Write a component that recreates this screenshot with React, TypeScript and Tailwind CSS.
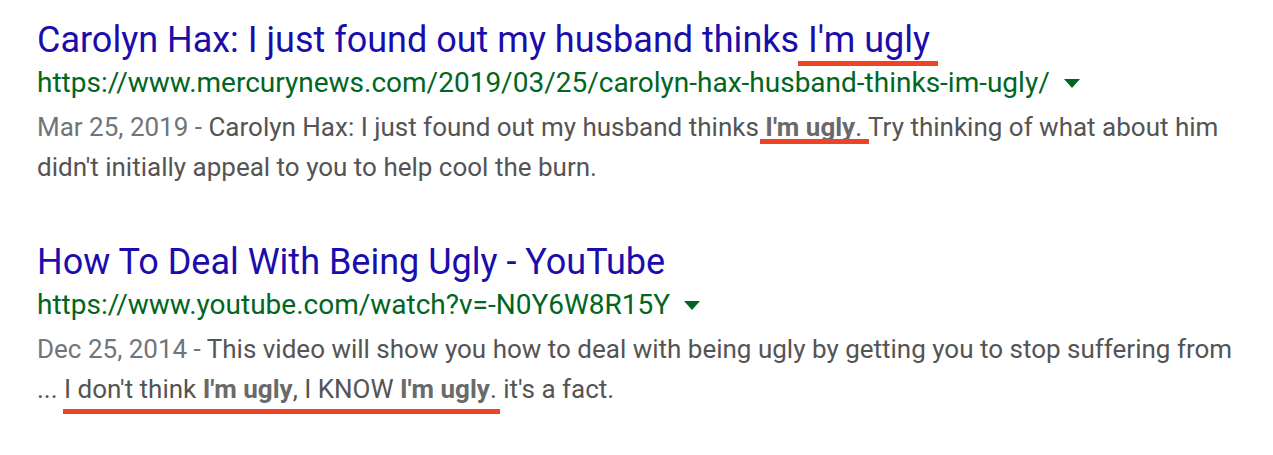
import React from "react";

function Mark({ children, l, r, top }: { children: React.ReactNode; l: string; r: string; top: string }) {
  return (
    <span className="relative">
      {children}
      <span className={`absolute h-[5px] bg-[#ee4426] ${l} ${r} ${top}`} />
    </span>
  );
}

function Caret() {
  return (
    <svg width="16" height="9" viewBox="0 0 16 9" className="ml-[14px] inline-block shrink-0">
      <polygon points="0,0 16,0 8,9" fill="#006621" />
    </svg>
  );
}

export default function App() {
  return (
    <div className="min-h-[455px] w-[1273px] bg-white pl-[37px] pt-[18px] font-['Roboto','Liberation_Sans',sans-serif]">
      <div className="w-[1236px]">
        <div className="text-[36px] leading-[44px] text-[#1a0dab] whitespace-nowrap">
          Carolyn Hax: I just found out my husband thinks{" "}
          <Mark l="left-[-10px]" r="right-[-8px]" top="top-[42px]">I'm ugly</Mark>
        </div>
        <div className="mt-[5px] flex items-center text-[28px] leading-[32px] text-[#006621] whitespace-nowrap">
          <span>https://www.mercurynews.com/2019/03/25/carolyn-hax-husband-thinks-im-ugly/</span>
          <Caret />
        </div>
        <div className="mt-[8px] text-[26px] leading-[40px] text-[#545454] whitespace-nowrap">
          <span className="text-[#70757a]">Mar 25, 2019 - </span>
          Carolyn Hax: I just found out my husband thinks{" "}
          <Mark l="left-[-5px]" r="right-[-7px]" top="top-[27px]">
            <b className="font-bold text-[#6a6a6a]">I'm ugly</b>.
          </Mark>{" "}
          Try thinking of what about him
          <br />
          didn't initially appeal to you to help cool the burn.
        </div>

        <div className="mt-[53px] text-[36px] leading-[44px] text-[#1a0dab] whitespace-nowrap">
          How To Deal With Being Ugly - YouTube
        </div>
        <div className="mt-[5px] flex items-center text-[28px] leading-[32px] text-[#006621] whitespace-nowrap">
          <span>https://www.youtube.com/watch?v=-N0Y6W8R15Y</span>
          <Caret />
        </div>
        <div className="mt-[8px] text-[26px] leading-[40px] text-[#545454] whitespace-nowrap">
          <span className="text-[#70757a]">Dec 25, 2014 - </span>
          This video will show you how to deal with being ugly by getting you to stop suffering from
          <br />
          ...{" "}
          <Mark l="left-[-1px]" r="right-[-3px]" top="top-[35px]">
            I don't think <b className="font-bold text-[#6a6a6a]">I'm ugly</b>, I KNOW{" "}
            <b className="font-bold text-[#6a6a6a]">I'm ugly</b>.
          </Mark>{" "}
          it's a fact.
        </div>
      </div>
    </div>
  );
}
